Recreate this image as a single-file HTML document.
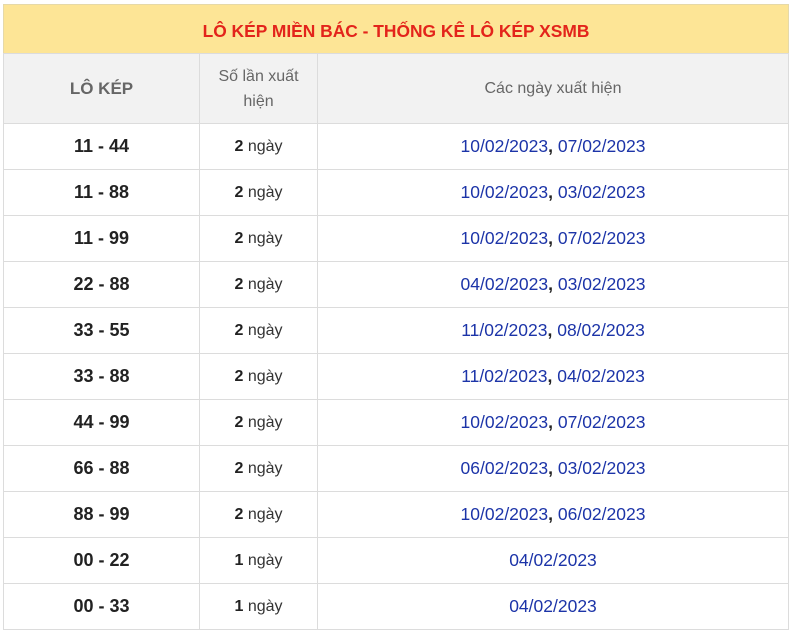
<!DOCTYPE html>
<html><head><meta charset="utf-8"><style>
*{margin:0;padding:0;box-sizing:border-box}
body{width:791px;height:630px;background:#fff;font-family:"Liberation Sans",Arial,sans-serif;position:relative;overflow:hidden}
.t{position:absolute;left:3px;top:4px;width:786px;height:49px;background:#fde596;color:#e3241b;font-weight:bold;font-size:17.4px;text-align:center;line-height:52px;border:1px solid #e6d9a8;border-bottom:none}
table{position:absolute;left:3px;top:53px;width:786px;border-collapse:collapse}
td{border:1px solid #dcdcdc;text-align:center;vertical-align:middle}
tr.h td{height:70px;background:#f2f2f2;color:#666;font-size:16px;line-height:25px}
tr.r td{height:46px}
td.c1{width:196px;font-weight:bold;font-size:18px;color:#222}
td.c2{width:118px;font-size:16px;color:#333}
td.c2 b{color:#222}
td.c3{font-size:17.5px;color:#1c34a8}
td.c3 b{color:#222}
</style></head><body>
<div class="t">LÔ KÉP MIỀN BÁC - THỐNG KÊ LÔ KÉP XSMB</div>
<table>
<tr class="h"><td class="c1" style="color:#666;font-size:17px">LÔ KÉP</td><td class="c2" style="color:#666">Số lần xuất<br>hiện</td><td>Các ngày xuất hiện</td></tr>
<tr class="r"><td class="c1">11 - 44</td><td class="c2"><b>2</b> ngày</td><td class="c3">10/02/2023<b>,</b> 07/02/2023</td></tr>
<tr class="r"><td class="c1">11 - 88</td><td class="c2"><b>2</b> ngày</td><td class="c3">10/02/2023<b>,</b> 03/02/2023</td></tr>
<tr class="r"><td class="c1">11 - 99</td><td class="c2"><b>2</b> ngày</td><td class="c3">10/02/2023<b>,</b> 07/02/2023</td></tr>
<tr class="r"><td class="c1">22 - 88</td><td class="c2"><b>2</b> ngày</td><td class="c3">04/02/2023<b>,</b> 03/02/2023</td></tr>
<tr class="r"><td class="c1">33 - 55</td><td class="c2"><b>2</b> ngày</td><td class="c3">11/02/2023<b>,</b> 08/02/2023</td></tr>
<tr class="r"><td class="c1">33 - 88</td><td class="c2"><b>2</b> ngày</td><td class="c3">11/02/2023<b>,</b> 04/02/2023</td></tr>
<tr class="r"><td class="c1">44 - 99</td><td class="c2"><b>2</b> ngày</td><td class="c3">10/02/2023<b>,</b> 07/02/2023</td></tr>
<tr class="r"><td class="c1">66 - 88</td><td class="c2"><b>2</b> ngày</td><td class="c3">06/02/2023<b>,</b> 03/02/2023</td></tr>
<tr class="r"><td class="c1">88 - 99</td><td class="c2"><b>2</b> ngày</td><td class="c3">10/02/2023<b>,</b> 06/02/2023</td></tr>
<tr class="r"><td class="c1">00 - 22</td><td class="c2"><b>1</b> ngày</td><td class="c3">04/02/2023</td></tr>
<tr class="r"><td class="c1">00 - 33</td><td class="c2"><b>1</b> ngày</td><td class="c3">04/02/2023</td></tr>
</table>
</body></html>
